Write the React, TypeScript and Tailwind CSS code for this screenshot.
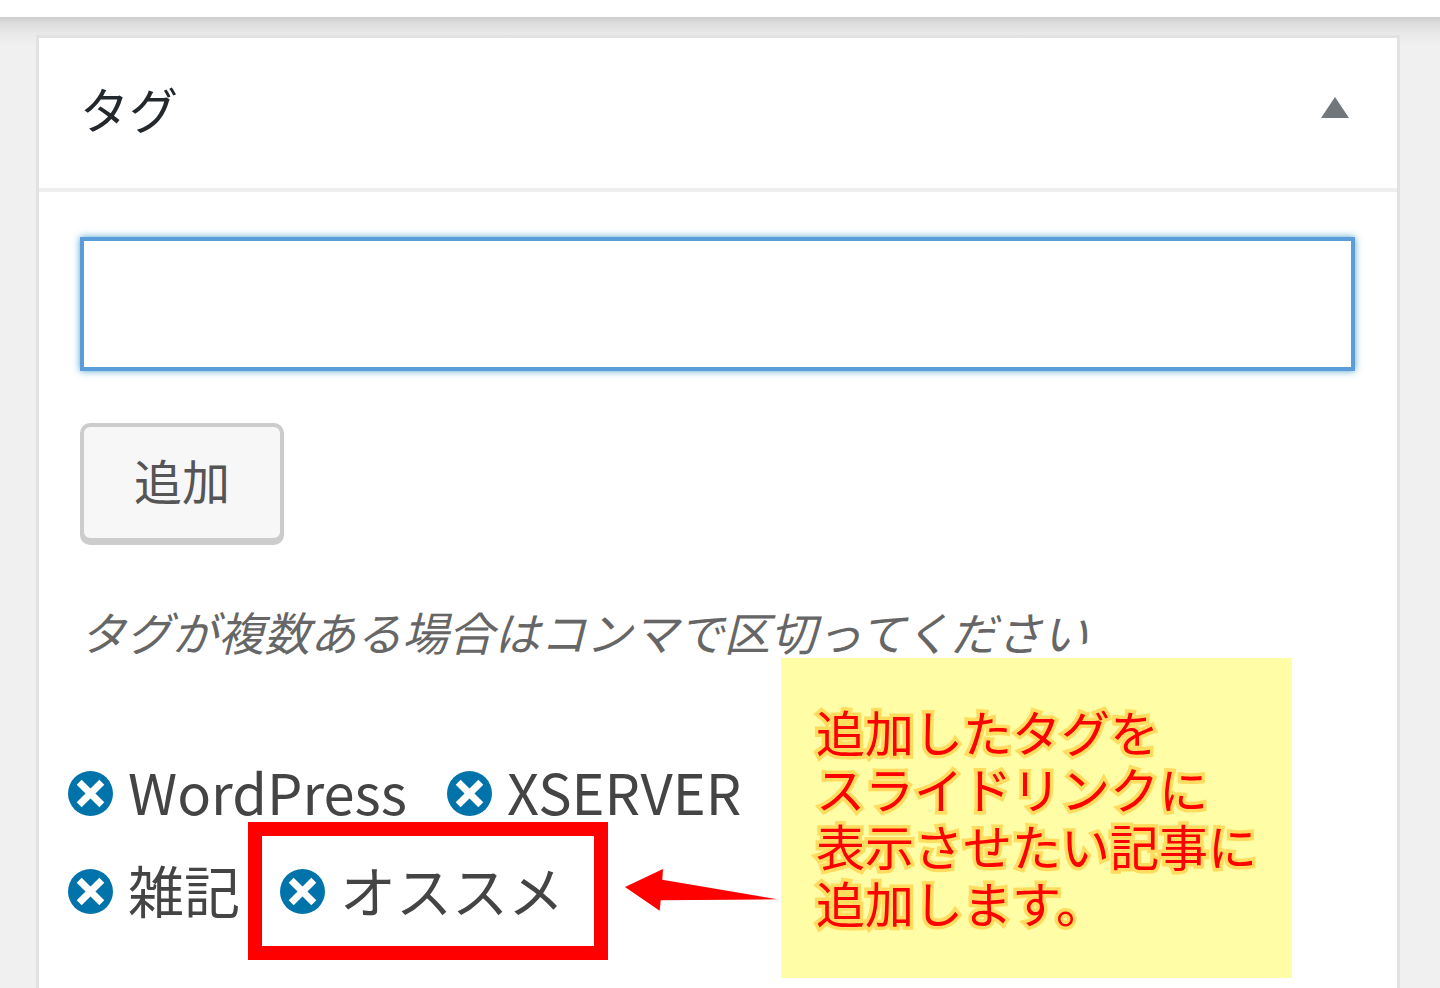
interface Tag {
  id: string;
  name: string;
  highlighted?: boolean;
}

const TAGS: Tag[] = [
  { id: "tag-wordpress", name: "WordPress" },
  { id: "tag-xserver", name: "XSERVER" },
  { id: "tag-zakki", name: "雑記" },
  { id: "tag-osusume", name: "オススメ", highlighted: true },
];

const NOTE_LINES = ["追加したタグを", "スライドリンクに", "表示させたい記事に", "追加します。"];

function RemoveIcon() {
  return (
    <svg viewBox="0 0 45 45" className="size-[45px]" aria-hidden="true">
      <circle cx="22.5" cy="22.5" r="22.5" fill="#0073aa" />
      <path d="M11.2 11.2 33.8 33.8M33.8 11.2 11.2 33.8" stroke="#fff" strokeWidth="7" />
    </svg>
  );
}

function TagItem({ tag }: { tag: Tag }) {
  return (
    <li className="relative flex h-[98px] items-center gap-[15px]">
      <button type="button" aria-labelledby={tag.id} className="mt-1 shrink-0 rounded-full">
        <RemoveIcon />
      </button>
      <span id={tag.id} className="whitespace-nowrap text-[56px] leading-[98px] text-[#444]">
        {tag.name}
      </span>
      {tag.highlighted && (
        <div className="pointer-events-none absolute -top-[18px] -right-11 -bottom-[22px] -left-8 border-[14px] border-[#f00]" />
      )}
    </li>
  );
}

function Note() {
  return (
    <div className="absolute -top-[84px] left-[713px] bg-[#fffea6] px-[35px] pt-11 pb-12">
      <p className="whitespace-nowrap text-[49px] leading-[57px] text-[#f00] [-webkit-text-stroke:7px_#ffdc5e] [paint-order:stroke_fill]">
        {NOTE_LINES.map((line) => (
          <span key={line} className="block">
            {line}
          </span>
        ))}
      </p>
    </div>
  );
}

function Arrow() {
  return (
    <svg viewBox="0 0 153 42" className="absolute top-[127px] left-[557px] h-[42px] w-[153px]" aria-hidden="true">
      <path d="M0 18 38 0 37.3 10.7 152.5 30.3 35.7 31.3 34.7 41.7Z" fill="#f00" />
    </svg>
  );
}

export default function App() {
  return (
    <div
      lang="ja"
      className="flex min-h-screen flex-col overflow-x-hidden bg-[#f0f0f0] font-['Noto_Sans_CJK_JP',sans-serif]"
    >
      <div className="h-[17px] bg-white" />
      <main className="flex grow flex-col bg-[linear-gradient(#cdcdcd,#dedede_7px,#e8e8e8_16px,#f0f0f0_28px)] pt-[18px] pr-10 pl-9">
        <section className="grow border-[3px] border-b-0 border-[#e2e2e2] bg-white">
          <header className="flex h-[154px] items-center justify-between border-b-4 border-[#eee] pr-12 pb-[11px] pl-[41px]">
            <h2 id="tags-title" className="text-[49px] leading-[60px] text-[#23282d]">
              タグ
            </h2>
            <button type="button" aria-labelledby="tags-title" aria-expanded="true">
              <svg viewBox="0 0 28 21" className="h-[21px] w-7" aria-hidden="true">
                <path d="M14 0 28 21H0Z" fill="#72777c" />
              </svg>
            </button>
          </header>

          <div className="pt-[45px] pr-[42px] pl-[41px]">
            <input
              type="text"
              aria-labelledby="tags-title"
              className="block h-[134px] w-full border-4 border-[#5b9dd9] bg-white px-4 text-[48px] text-[#32373c] shadow-[0_0_7px_rgba(30,140,190,0.8)] outline-none"
            />
            <button
              type="button"
              className="mt-[52px] block h-[119px] w-[204px] rounded-[10px] border-4 border-[#ccc] bg-[#f7f7f7] pb-2 text-[48px] leading-[60px] text-[#555] shadow-[0_3px_0_#ccc]"
            >
              追加
            </button>
            <p className="mt-[59px] text-[46px] leading-[60px] text-[#666] italic">
              タグが複数ある場合はコンマで区切ってください
            </p>

            <div className="relative -mx-3 mt-[81px]">
              <ul className="flex max-w-[760px] flex-wrap gap-x-10">
                {TAGS.map((tag) => (
                  <TagItem key={tag.id} tag={tag} />
                ))}
              </ul>
              <Arrow />
              <Note />
            </div>
          </div>
        </section>
      </main>
    </div>
  );
}
